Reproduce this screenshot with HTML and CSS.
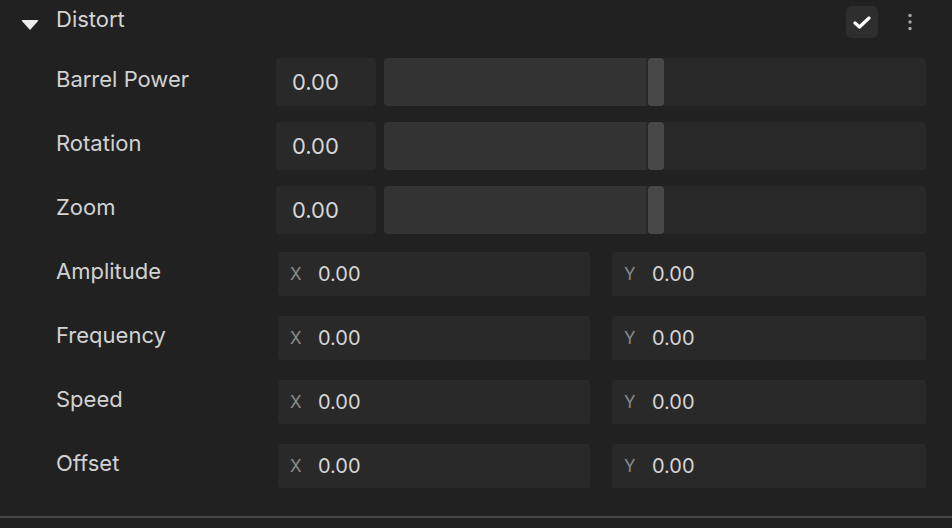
FILE: index.html
```html
<!DOCTYPE html>
<html lang="en">
<head>
  <meta charset="UTF-8" />
  <title>Distort</title>
  <link rel="stylesheet" href="styles.css">
</head>
<body>
  <div class="panel">
    <div class="panel-header">
      <span class="caret"></span>
      <span class="panel-title">Distort</span>
      <button class="toggle">
        <svg width="18" height="13" viewBox="0 0 18 13"><path d="M2 7 L6.5 11 L16 2" fill="none" stroke="#fff" stroke-width="3.2" stroke-linecap="round" stroke-linejoin="round"/></svg>
      </button>
      <button class="more">
        <svg width="4" height="18" viewBox="0 0 4 18"><circle cx="2" cy="2.5" r="1.7" fill="#a8a8a8"/><circle cx="2" cy="9" r="1.7" fill="#a8a8a8"/><circle cx="2" cy="15.5" r="1.7" fill="#a8a8a8"/></svg>
      </button>
    </div>

    <div class="rows">
      <div class="row">
        <div class="label">Barrel Power</div>
        <div class="slider-field">
          <div class="num">0.00</div>
          <div class="track"><div class="fill"></div><div class="handle"></div></div>
        </div>
      </div>
      <div class="row">
        <div class="label">Rotation</div>
        <div class="slider-field">
          <div class="num">0.00</div>
          <div class="track"><div class="fill"></div><div class="handle"></div></div>
        </div>
      </div>
      <div class="row">
        <div class="label">Zoom</div>
        <div class="slider-field">
          <div class="num">0.00</div>
          <div class="track"><div class="fill"></div><div class="handle"></div></div>
        </div>
      </div>
      <div class="row">
        <div class="label">Amplitude</div>
        <div class="vec">
          <div class="axis"><span class="ax">X</span><span class="val">0.00</span></div>
          <div class="axis"><span class="ax">Y</span><span class="val">0.00</span></div>
        </div>
      </div>
      <div class="row">
        <div class="label">Frequency</div>
        <div class="vec">
          <div class="axis"><span class="ax">X</span><span class="val">0.00</span></div>
          <div class="axis"><span class="ax">Y</span><span class="val">0.00</span></div>
        </div>
      </div>
      <div class="row">
        <div class="label">Speed</div>
        <div class="vec">
          <div class="axis"><span class="ax">X</span><span class="val">0.00</span></div>
          <div class="axis"><span class="ax">Y</span><span class="val">0.00</span></div>
        </div>
      </div>
      <div class="row">
        <div class="label">Offset</div>
        <div class="vec">
          <div class="axis"><span class="ax">X</span><span class="val">0.00</span></div>
          <div class="axis"><span class="ax">Y</span><span class="val">0.00</span></div>
        </div>
      </div>
    </div>
  </div>
</body>
</html>
```

FILE: styles.css
```css
body {
  margin: 0;
  padding: 0;
  background: #212121;
  font-family: Inter, 'Noto Sans', sans-serif;
  color: #d2d2d2;
  height: 528px;
  overflow: hidden;
}

.panel {
  padding: 0 26px 0 21px;
  border-bottom: 2px solid #464646;
  height: 516px;
  box-sizing: content-box;
}

.panel-header {
  display: flex;
  align-items: center;
  height: 44px;
  margin-bottom: 6px;
}

.caret {
  width: 0;
  height: 0;
  border-left: 9px solid transparent;
  border-right: 9px solid transparent;
  border-top: 10px solid #ececec;
  border-radius: 2px;
  margin-top: 6px;
}

.panel-title {
  font-size: 22px;
  margin-left: 17px;
  margin-bottom: 6px;
  color: #d4d4d4;
  flex: 1;
}

.toggle {
  width: 32px;
  height: 32px;
  border: none;
  border-radius: 6px;
  background: #2e2e2e;
  display: flex;
  align-items: center;
  justify-content: center;
  padding: 0;
}

.more {
  width: 16px;
  height: 32px;
  border: none;
  background: none;
  display: flex;
  align-items: center;
  justify-content: center;
  padding: 0;
  margin-left: 24px;
  margin-right: 8px;
}

.row {
  display: grid;
  grid-template-columns: 219px 1fr;
  align-items: center;
  height: 64px;
  padding-left: 35px;
}

.label {
  font-size: 22px;
  margin-bottom: 6px;
}

.slider-field {
  display: flex;
  gap: 8px;
  height: 48px;
  margin-left: 1px;
}

.num {
  width: 100px;
  background: #292929;
  border-radius: 4px;
  font-size: 22px;
  display: flex;
  align-items: center;
  padding-left: 16px;
  box-sizing: border-box;
  color: #d6d6d6;
}

.track {
  flex: 1;
  display: flex;
  background: #292929;
  border-radius: 4px;
  overflow: hidden;
}

.fill {
  width: 262px;
  background: #333333;
  margin-right: 2px;
}

.handle {
  width: 16px;
  background: #474747;
  border-radius: 4px;
}

.vec {
  display: grid;
  grid-template-columns: 312px 1fr;
  gap: 22px;
  margin-left: 3px;
  height: 44px;
}

.axis {
  background: #292929;
  border-radius: 3px;
  display: flex;
  align-items: center;
  padding-left: 12px;
}

.ax {
  width: 28px;
  font-size: 17px;
  color: #8a8a8a;
}

.val {
  font-size: 20px;
  color: #d6d6d6;
}
```
